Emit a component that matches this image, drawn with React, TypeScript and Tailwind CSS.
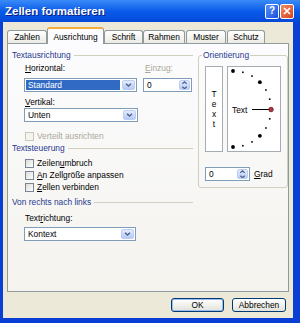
import React from "react";

const sans = "font-['Liberation_Sans',Arial,sans-serif]";

// letter with access-key underline
const Acc = ({ text, at }: { text: string; at: number }) => (
  <span>
    {text.slice(0, at)}
    <span className="underline underline-offset-[1px]">{text[at]}</span>
    {text.slice(at + 1)}
  </span>
);

const Chevron = ({ up }: { up?: boolean }) => (
  <svg width="7" height="4" viewBox="0 0 7 4">
    <path d={up ? "M1 3.2L3.5 1 6 3.2" : "M1 0.8L3.5 3 6 0.8"} fill="none" stroke="#4D6185" strokeWidth="1.4" />
  </svg>
);

const Select = ({ value, hl, w }: { value: string; hl?: boolean; w: string }) => (
  <div className={`flex h-[14px] border border-[#7F9DB9] bg-white ${w}`}>
    <div className="flex flex-1 p-px">
      {hl ? (
        <span className="flex flex-1 items-center bg-[#316AC5] pl-[2px] text-white">{value}</span>
      ) : (
        <span className="flex items-center pl-[2px]">{value}</span>
      )}
    </div>
    <div className="m-px flex w-[13px] items-center justify-center rounded-[2px] border border-[#BCCDF3] bg-gradient-to-b from-[#E4ECFE] to-[#B6CAF5]">
      <Chevron />
    </div>
  </div>
);

const Spin = ({ w }: { w: string }) => (
  <div className={`flex h-[14px] border border-[#7F9DB9] bg-white ${w}`}>
    <span className="flex flex-1 items-center pl-[3px]">0</span>
    <div className="m-px flex w-[11px] flex-col items-center justify-center gap-[1px] rounded-[2px] border border-[#BCCDF3] bg-gradient-to-b from-[#E4ECFE] to-[#B6CAF5]">
      <Chevron up />
      <Chevron />
    </div>
  </div>
);

const Check = ({ children, disabled }: { children: React.ReactNode; disabled?: boolean }) => (
  <div className="flex h-[12px] items-center pl-[1px]">
    <div
      className={
        disabled
          ? "h-[9px] w-[9px] border border-[#CAC8BB] bg-[#F4F3EE]"
          : "h-[9px] w-[9px] border border-[#7A8595] bg-gradient-to-br from-[#DCDCD7] to-white"
      }
    />
    <span className={disabled ? "ml-[3px] text-[#ACA899]" : "ml-[3px]"}>{children}</span>
  </div>
);

const Header = ({ children }: { children: React.ReactNode }) => (
  <div className="flex h-[10px] items-center">
    <span className="text-[#1F3A8E]">{children}</span>
    <div className="ml-[3px] h-px flex-1 bg-[#D0D0BF]" />
  </div>
);

const Dial = () => {
  const dots = [];
  for (let a = -90; a <= 90; a += 15) {
    const r = (a * Math.PI) / 180;
    const x = 5 + 38 * Math.cos(r);
    const y = 42 - 38 * Math.sin(r);
    if (a === 0) continue;
    if (a % 45 === 0) dots.push(<circle key={a} cx={x} cy={y} r={1.9} fill="#000" />);
    else dots.push(<rect key={a} x={x - 0.8} y={y - 0.8} width={1.6} height={1.6} fill="#000" />);
  }
  return (
    <svg width="52" height="84" viewBox="0 0 52 84">
      {dots}
      <text x="4" y="45.5" fontSize="8.4" fontFamily="Liberation Sans, Arial, sans-serif" fill="#000">
        Text
      </text>
      <line x1="24" y1="42.5" x2="41" y2="42.5" stroke="#000" strokeWidth="1" />
      <circle cx="43" cy="42.5" r="2.3" fill="#B3333C" stroke="#5A1419" strokeWidth="0.7" />
    </svg>
  );
};

const tabs: [string, string, boolean?][] = [
  ["Zahlen", "w-[40px]"],
  ["Ausrichtung", "w-[57px]", true],
  ["Schrift", "w-[39px]"],
  ["Rahmen", "w-[42px]"],
  ["Muster", "w-[40px] ml-px"],
  ["Schutz", "w-[38px] ml-px"],
];

export default function App() {
  return (
    <div className={`flex h-[323px] w-[300px] flex-col bg-[#0A3FD6] text-[8.4px] leading-[10px] text-black ${sans}`}>
      {/* title bar */}
      <div className="flex h-[22px] items-center bg-gradient-to-b from-[#3A8AF8] via-[#0A5BEA] to-[#0449D8] pl-[5px] pr-[6px]">
        <span className="flex-1 text-[11.5px] font-bold text-white [text-shadow:1px_1px_0_#0A1E80]">Zellen formatieren</span>
        <div className="flex gap-px">
          <div className="flex h-[15px] w-[14px] items-center justify-center rounded-[2px] border border-white bg-gradient-to-br from-[#5A8FF8] to-[#1A4FDC] text-[10px] font-bold text-white">
            ?
          </div>
          <div className="flex h-[15px] w-[14px] items-center justify-center rounded-[2px] border border-white bg-gradient-to-br from-[#F08A62] to-[#D5431E]">
            <svg width="8" height="8" viewBox="0 0 8 8">
              <path d="M1 1l6 6M7 1L1 7" stroke="#fff" strokeWidth="1.7" />
            </svg>
          </div>
        </div>
      </div>

      {/* dialog body */}
      <div className="mb-[5px] ml-[3px] mr-[7px] flex flex-1 flex-col bg-[#ECE9D8]">
        {/* tabs */}
        <div className="mt-[5px] flex items-end pl-[4px]">
          {tabs.map(([t, w, sel]) =>
            sel ? (
              <div
                key={t}
                className={`relative z-10 -mb-px flex h-[17px] items-center justify-center rounded-t-[3px] border-x border-t-2 border-x-[#919B9C] border-t-[#F2AE3D] bg-[#FCFCFE] ${w}`}
              >
                {t}
              </div>
            ) : (
              <div
                key={t}
                className={`flex h-[13px] items-center justify-center rounded-t-[3px] border-x border-t border-[#919B9C] bg-gradient-to-b from-white to-[#ECEBE5] ${w}`}
              >
                {t}
              </div>
            )
          )}
        </div>

        {/* panel */}
        <div className="mx-[4px] flex h-[249px] border border-[#919B9C] bg-gradient-to-b from-[#FCFCFE] to-[#F4F3EE] pl-[4px] pt-[6px]">
          <div className="flex w-[181px] flex-col">
            <Header>Textausrichtung</Header>
            <div className="mt-[3px] flex gap-[6px] pl-[12px]">
              <div className="flex w-[113px] flex-col">
                <div className="h-[10px] pl-px">
                  <Acc text="Horizontal:" at={0} />
                </div>
                <div className="mt-[5px]">
                  <Select value="Standard" hl w="w-[113px]" />
                </div>
              </div>
              <div className="flex w-[49px] flex-col">
                <div className="h-[10px] pl-[2px] text-[#ACA899]">
                  <Acc text="Einzug:" at={0} />
                </div>
                <div className="mt-[5px]">
                  <Spin w="w-[49px]" />
                </div>
              </div>
            </div>
            <div className="mt-[5px] flex flex-col pl-[12px]">
              <div className="h-[10px] pl-px">
                <Acc text="Vertikal:" at={0} />
              </div>
              <div className="mt-[1px]">
                <Select value="Unten" w="w-[114px]" />
              </div>
              <div className="mt-[8px]">
                <Check disabled>Verteilt ausrichten</Check>
              </div>
            </div>
            <div className="mt-[1px]">
              <Header>Textsteuerung</Header>
            </div>
            <div className="mt-[4px] flex flex-col pl-[12px]">
              <Check>
                <Acc text="Zeilenumbruch" at={6} />
              </Check>
              <Check>
                <Acc text="An Zellgröße anpassen" at={0} />
              </Check>
              <Check>
                <Acc text="Zellen verbinden" at={0} />
              </Check>
            </div>
            <div className="mt-[4px]">
              <Header>Von rechts nach links</Header>
            </div>
            <div className="mt-[6px] flex flex-col pl-[12px]">
              <div className="h-[10px] pl-px">
                <Acc text="Textrichtung:" at={4} />
              </div>
              <div className="mt-[4px]">
                <Select value="Kontext" w="w-[112px]" />
              </div>
            </div>
          </div>

          {/* Orientierung */}
          <fieldset className="ml-[5px] h-fit w-[90px] rounded-[3px] border border-[#D0D0BF] pb-[6px] pl-[3px] pr-[4px]">
            <legend className="px-px leading-[10px] text-[#1F3A8E]">Orientierung</legend>
            <div className="mt-[6px] flex gap-[4px] pl-[3px]">
              <div className="flex h-[86px] w-[18px] flex-col items-center justify-center border border-[#A5ACB2] bg-white leading-[10px]">
                <span>T</span>
                <span>e</span>
                <span>x</span>
                <span>t</span>
              </div>
              <div className="h-[86px] w-[54px] border border-[#A5ACB2] bg-white">
                <Dial />
              </div>
            </div>
            <div className="mt-[15px] flex items-center pl-[3px]">
              <Spin w="w-[45px]" />
              <span className="ml-[4px]">
                <Acc text="Grad" at={0} />
              </span>
            </div>
          </fieldset>
        </div>

        {/* buttons */}
        <div className="mt-[6px] flex justify-end gap-[8px] pr-[7px]">
          <div className="flex h-[14px] w-[53px] items-center justify-center rounded-[3px] border border-[#003C74] bg-gradient-to-b from-white to-[#E3E3DB] shadow-[inset_0_0_0_1px_#9DBBEE]">
            OK
          </div>
          <div className="flex h-[14px] w-[54px] items-center justify-center rounded-[3px] border border-[#003C74] bg-gradient-to-b from-white to-[#E3E3DB]">
            Abbrechen
          </div>
        </div>
      </div>
    </div>
  );
}
